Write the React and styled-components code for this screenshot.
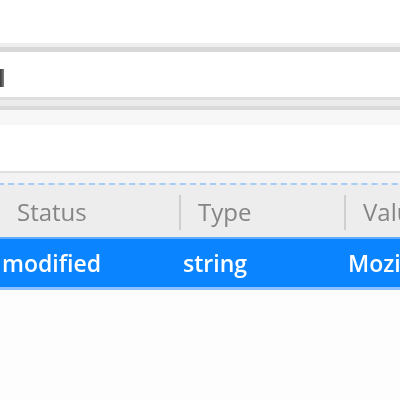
import React from "react";
import styled, { createGlobalStyle } from "styled-components";

const Global = createGlobalStyle`
  html, body { margin: 0; padding: 0; background: #ffffff; }
  body { font-family: "Open Sans", "DejaVu Sans", sans-serif; overflow: hidden; }
`;

const Page = styled.div`
  width: 400px;
  height: 400px;
  overflow: hidden;
  display: flex;
  flex-direction: column;
  background: #fdfdfe;
  filter: blur(0.45px);
`;

const TopSpace = styled.div`
  height: 43px;
  background: #ffffff;
`;

const Toolbar = styled.div`
  height: 4px;
  background: #eeeeee;
  border-bottom: 5px solid #d8d8d8;
`;

const SearchBox = styled.div`
  height: 45px;
  background: #ffffff;
  display: flex;
  align-items: center;
`;

const Caret = styled.div`
  width: 4px;
  height: 18px;
  margin-top: 6px;
  background: linear-gradient(to right, #3a3a3a, #808080);
`;

const Divider = styled.div`
  height: ${(p) => p.$h}px;
  background: ${(p) => p.$c};
`;

const Spacer = styled.div`
  height: 46px;
  background: #ffffff;
`;

const Table = styled.div`
  margin-left: -2px;
  width: 420px;
`;

const HeaderRow = styled.div`
  display: grid;
  grid-template-columns: 181px 165px 1fr;
  height: 52px;
  background: #ededed;
  border-top: 2px dashed #a6cdf8;
`;

const HeaderCell = styled.div`
  position: relative;
  display: flex;
  align-items: center;
  padding-left: 19px;
  font-size: 24px;
  color: #858585;
  white-space: nowrap;
  &::before {
    content: "";
    display: ${(p) => (p.$sep ? "block" : "none")};
    position: absolute;
    left: 0;
    top: 10px;
    width: 2px;
    height: 35px;
    background: #cfcfcf;
  }
`;

const Row = styled.div`
  display: grid;
  grid-template-columns: 181px 165px 1fr;
  height: 48px;
  background: #0a84ff;
  border-top: 2px solid #60adff;
  border-bottom: 3px solid #8cc2ff;
`;

const Cell = styled.div`
  display: flex;
  align-items: center;
  padding-left: 4px;
  font-size: 23px;
  font-weight: 600;
  color: #ffffff;
  white-space: nowrap;
`;

export default function App() {
  return (
    <Page>
      <Global />
      <TopSpace />
      <Toolbar />
      <SearchBox>
        <Caret />
      </SearchBox>
      <Divider $h={3} $c="#dedede" />
      <Divider $h={6} $c="#ececec" />
      <Divider $h={4} $c="#dadada" />
      <Divider $h={15} $c="#f7f7f7" />
      <Spacer />
      <Divider $h={2} $c="#e0e0e0" />
      <Divider $h={10} $c="#f3f3f3" />
      <Table>
        <HeaderRow>
          <HeaderCell>Status</HeaderCell>
          <HeaderCell $sep>Type</HeaderCell>
          <HeaderCell $sep>Value</HeaderCell>
        </HeaderRow>
        <Row>
          <Cell>modified</Cell>
          <Cell>string</Cell>
          <Cell>Mozilla</Cell>
        </Row>
      </Table>
    </Page>
  );
}
